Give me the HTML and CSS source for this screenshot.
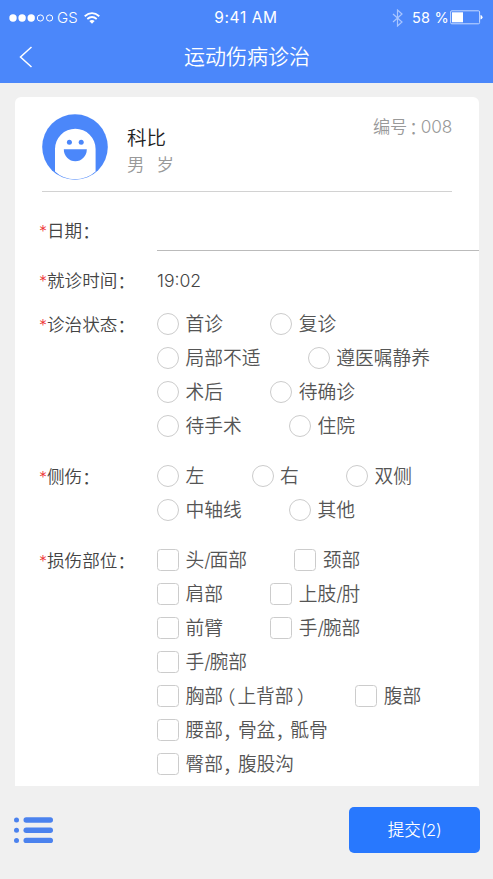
FILE: index.html
```html
<!DOCTYPE html>
<html lang="zh-CN">
<head>
<meta charset="utf-8">
<title>运动伤病诊治</title>
<link rel="stylesheet" href="styles.css">
</head>
<body>
<header class="top">
  <div class="status">
    <div class="carrier">
      <svg width="46" height="10" viewBox="0 0 46 10" fill="#fff" stroke="#fff"><g stroke="none"><circle cx="4" cy="5" r="3.7"/><circle cx="13.1" cy="5" r="3.7"/><circle cx="22.2" cy="5" r="3.7"/></g><g fill="none"><circle cx="31.4" cy="5" r="3.1"/><circle cx="40.6" cy="5" r="3.1"/></g></svg>
      <span class="gs">GS</span>
      <svg class="wifi" width="16" height="12" viewBox="0 0 16 12" fill="none" stroke="#fff" stroke-width="1.8"><path d="M.7 4.2Q8-2 15.300 4.200M3.300 7Q8 3 12.700 7"/><path d="M5.300 9Q8 6.800 10.700 9L8 11.800Z" fill="#fff" stroke="none"/></svg>
    </div>
    <div class="clock">9:41 AM</div>
    <div class="power">
      <svg width="12" height="18" viewBox="0 0 12 18" fill="none" stroke="#a9c6ff" stroke-width="1.200"><path d="M1 5l9 8-4.500 4V1L10 5l-9 8"/></svg>
      <span class="pct">58 %</span>
      <svg width="33" height="15" viewBox="0 0 33 15"><rect x=".6" y=".8" width="29" height="13" rx="1.200" fill="none" stroke="#c5d9ff" stroke-width="1"/><path d="M2 2.300h11v10H2z" fill="#fff"/><path d="M30.500 5q2 .5 2 2.300t-2 2.300z" fill="#fff"/></svg>
    </div>
  </div>
  <div class="nav">
    <svg class="back" width="14" height="22" viewBox="0 0 14 22" fill="none" stroke="#fff" stroke-width="1.500"><path d="M12.500 1L1.500 11l11 10"/></svg>
    <h1>运动伤病诊治</h1>
  </div>
</header>
<main class="card">
  <section class="profile">
    <svg class="avatar" width="66" height="66" viewBox="0 0 66 66"><circle cx="33" cy="33" r="32.800" fill="#4b87fa"/><path d="M13 57.500V35a20.300 20.300 0 0 1 40.600 0v22.500Q45 65.200 33 65.200T13 57.500Z" fill="#fff"/><g fill="#4b87fa"><circle cx="27.400" cy="28.300" r="2.500"/><circle cx="39.200" cy="28.300" r="2.500"/><path d="M21.800 35.200h23a11.500 12 0 0 1-23 0Z"/></g></svg>
    <div class="who">
      <div class="name">科比</div>
      <div class="meta"><span>男</span><span>岁</span></div>
    </div>
    <div class="number">编号<span class="colon">：</span><span class="digits">008</span></div>
  </section>
  <section class="field date"><div class="label"><i>*</i>日期<span class="colon">：</span></div><div class="input"></div></section>
  <section class="field time"><div class="label"><i>*</i>就诊时间<span class="colon">：</span></div><div class="value">19:02</div></section>
  <section class="field state">
    <div class="label"><i>*</i>诊治状态<span class="colon">：</span></div>
    <div class="choices radio">
      <div class="row"><span class="opt">首诊</span><span class="opt">复诊</span></div>
      <div class="row"><span class="opt">局部不适</span><span class="opt">遵医嘱静养</span></div>
      <div class="row"><span class="opt">术后</span><span class="opt">待确诊</span></div>
      <div class="row"><span class="opt">待手术</span><span class="opt">住院</span></div>
    </div>
  </section>
  <section class="field side">
    <div class="label"><i>*</i>侧伤<span class="colon">：</span></div>
    <div class="choices radio">
      <div class="row"><span class="opt">左</span><span class="opt">右</span><span class="opt">双侧</span></div>
      <div class="row"><span class="opt">中轴线</span><span class="opt">其他</span></div>
    </div>
  </section>
  <section class="field part">
    <div class="label"><i>*</i>损伤部位<span class="colon">：</span></div>
    <div class="choices check">
      <div class="row"><span class="opt">头<span class="slash">/</span>面部</span><span class="opt">颈部</span></div>
      <div class="row"><span class="opt">肩部</span><span class="opt">上肢<span class="slash">/</span>肘</span></div>
      <div class="row"><span class="opt">前臂</span><span class="opt">手<span class="slash">/</span>腕部</span></div>
      <div class="row"><span class="opt">手<span class="slash">/</span>腕部</span></div>
      <div class="row"><span class="opt">胸部<span class="open">（</span>上背部<span class="close">）</span></span><span class="opt">腹部</span></div>
      <div class="row"><span class="opt">腰部<span class="comma">，</span>骨盆<span class="comma">，</span>骶骨</span></div>
      <div class="row"><span class="opt">臀部<span class="comma">，</span>腹股沟</span></div>
    </div>
  </section>
</main>
<footer class="bottom">
  <svg width="40" height="27" viewBox="0 0 40 27" fill="#4b82ee"><circle cx="2.500" cy="3" r="2.500"/><circle cx="2.500" cy="13.200" r="2.500"/><circle cx="2.500" cy="23.400" r="2.500"/><rect x="9.500" y=".3" width="29.500" height="5.400" rx="2.700"/><rect x="9.500" y="10.500" width="29.500" height="5.400" rx="2.700"/><rect x="9.500" y="20.700" width="29.500" height="5.400" rx="2.700"/></svg>
  <button class="submit">提交<span>(2)</span></button>
</footer>
</body>
</html>
```
FILE: styles.css
```css
*, *::before { box-sizing: border-box; }
body {
  margin: 0;
  height: 879px;
  overflow: hidden;
  background: #f0f0f0;
  color: #444;
  font-family: Inter, "Noto Sans CJK SC", sans-serif;
  font-weight: 350;
  display: flex;
  flex-direction: column;
}
.top { height: 83px; background: #4b87fa; color: #fff; flex: none; }
.status {
  height: 34px;
  padding: 1px 10px 0 9px;
  display: grid;
  grid-template-columns: 1fr auto 1fr;
  align-items: center;
  font-size: 15.5px;
  line-height: 20px;
  font-weight: 400;
}
.carrier, .power { display: flex; align-items: center; }
.gs { font-size: 15px; font-weight: 300; margin-left: 2px; }
.wifi { margin-left: 6px; }
.clock { letter-spacing: .6px; }
.power { justify-content: flex-end; }
.pct { margin: 0 1px 0 8px; white-space: nowrap; font-size: 14.5px; letter-spacing: .2px; }
.nav {
  height: 46px;
  padding: 0 19px;
  display: grid;
  grid-template-columns: 1fr auto 1fr;
  align-items: center;
}
h1 { margin: 0 0 0 1px; font-size: 21px; font-weight: 350; line-height: 30px; }
.card {
  flex: none;
  height: 689px;
  margin: 14px 14px 0 15px;
  background: #fff;
  border-radius: 6px 6px 0 0;
  overflow: hidden;
}
.profile {
  display: flex;
  height: 95px;
  margin: 0 27px;
  padding-top: 17px;
  border-bottom: 1px solid #d2d2d2;
}
.avatar { flex: none; }
.who { margin: 10px 0 0 19px; flex: 1; }
.name { font-size: 19.5px; line-height: 28px; color: #222; }
.meta { display: flex; gap: 12px; font-size: 17.5px; line-height: 26px; color: #999; }
.number { display: flex; font-size: 17.2px; line-height: 26px; color: #999; }
.colon, .open, .close, .comma { font-family: "Noto Sans CJK SC", sans-serif; font-feature-settings: "halt"; }
.number .colon { padding: 0 3px 0 2px; }
.digits { letter-spacing: -.2px; }
.field { display: flex; padding-left: 24px; }
.label { width: 118px; flex: none; font-size: 17.6px; line-height: 28px; padding-top: 1px; white-space: nowrap; display: flex; }
.label i { font-style: normal; color: #e33; width: 8px; font-size: 16px; }
.date { margin-top: 24px; height: 35px; }
.input { flex: 1; border-bottom: 1px solid #bbb; }
.time { margin-top: 15px; height: 28px; }
.value { font-size: 17.6px; line-height: 28px; padding-top: 1px; }
.state { margin-top: 13px; }
.side { margin-top: 16px; }
.part { margin-top: 16.5px; }
.state .label, .side .label, .part .label { padding-top: 4px; }
.choices { color: #555; font-size: 18.75px; }
.row { display: flex; gap: 47.3px; height: 33.95px; align-items: center; line-height: 28px; }
.opt { display: flex; align-items: center; white-space: nowrap; padding-top: 2px; }
.opt::before {
  content: "";
  width: 22px;
  height: 22px;
  margin: -2px 6.5px 0 0;
  border: 1.5px solid #ccc;
  border-radius: 3.5px;
  flex: none;
}
.radio .opt::before { border-radius: 50%; }
.slash { letter-spacing: -1.4px; }
.open { padding: 0 2px 0 3px; }
.close { padding: 0 2px 0 3px; }
.comma { padding: 0 5.5px 0 0; }
.bottom { display: flex; align-items: flex-start; justify-content: space-between; padding: 21px 13px 0 14px; }
.bottom svg { margin-top: 10px; }
.submit {
  width: 131px;
  height: 46px;
  border: 0;
  border-radius: 5px;
  background: #2878fe;
  color: #fff;
  font: 350 16.5px/24px Inter, "Noto Sans CJK SC", sans-serif;
}
.submit span { letter-spacing: -.3px; }
```
